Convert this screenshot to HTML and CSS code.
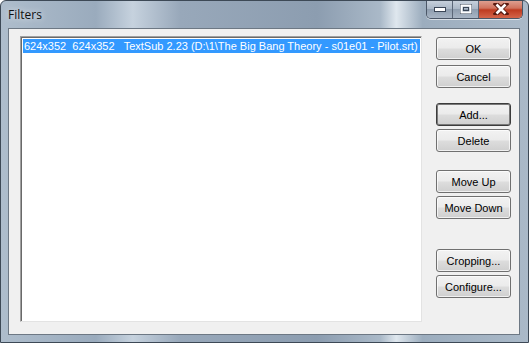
FILE: index.html
```html
<!DOCTYPE html>
<html lang="en">
<head>
    <meta charset="UTF-8">
    <title>Filters</title>
    <link rel="stylesheet" href="styles.css">
</head>
<body>
    <div class="window">
        <div class="titlebar">
            <span class="title">Filters</span>
            <div class="caption-buttons">
                <div class="cap cap-min">
                    <svg width="16" height="8" viewBox="0 0 16 8"><rect x="2.5" y="2.5" width="11" height="4" fill="#fff" stroke="#3a4656" stroke-width="1"/></svg>
                </div>
                <div class="cap cap-max">
                    <svg width="14" height="12" viewBox="0 0 14 12"><rect x="1.5" y="1.5" width="11" height="9" fill="none" stroke="#3a4656" stroke-width="1"/><rect x="2.5" y="2.5" width="9" height="7" fill="none" stroke="#fff" stroke-width="2"/><rect x="4.5" y="4.5" width="5" height="3" fill="none" stroke="#3a4656" stroke-width="1"/></svg>
                </div>
                <div class="cap cap-close">
                    <svg width="16" height="12" viewBox="0 0 16 12"><path d="M3 1 L8 5 L13 1 M3 11 L8 7 L13 11 M3 1 L13 11 M13 1 L3 11" stroke="#5a1a10" stroke-width="4.5" fill="none" stroke-linecap="square"/><path d="M3.5 1.5 L12.5 10.5 M12.5 1.5 L3.5 10.5" stroke="#fff" stroke-width="2.6" fill="none"/></svg>
                </div>
            </div>
        </div>
        <div class="client">
            <div class="listbox">
                <div class="item selected">624x352&nbsp;&nbsp;624x352&nbsp;&nbsp;&nbsp;TextSub 2.23 (D:\1\The Big Bang Theory - s01e01 - Pilot.srt)</div>
            </div>
            <div class="buttons">
                <button class="btn">OK</button>
                <button class="btn gap-sm">Cancel</button>
                <button class="btn btn-default gap-lg">Add...</button>
                <button class="btn gap-xs">Delete</button>
                <button class="btn gap-md">Move Up</button>
                <button class="btn gap-xs">Move Down</button>
                <button class="btn gap-xl">Cropping...</button>
                <button class="btn gap-xs">Configure...</button>
            </div>
        </div>
    </div>
</body>
</html>
```
FILE: styles.css
```css
body {
    margin: 0;
    padding: 0;
    background-color: #ffffff;
    font-family: 'Liberation Sans', Arial, sans-serif;
}

.window {
    width: 529px;
    height: 343px;
    box-sizing: border-box;
    display: flex;
    flex-direction: column;
    border: 1px solid #3d4956;
    border-radius: 6px 6px 0 0;
    background: linear-gradient(90deg, #aebdcc 0%, #9aabbd 18%, #c6d2de 25%, #98a8ba 34%, #8c9db0 60%, #aab9c8 72%, #dfe7ee 75%, #9cadbe 80%, #aab9c8 100%);
    overflow: hidden;
}

.titlebar {
    height: 27px;
    display: flex;
    justify-content: space-between;
    align-items: flex-start;
    padding-left: 7px;
    padding-right: 5px;
}

.title {
    font-family: 'Open Sans', 'Noto Sans', sans-serif;
    font-size: 12px;
    color: #111;
    margin-top: 5px;
    text-shadow: 0 0 6px rgba(255, 255, 255, 0.9);
}

.caption-buttons {
    display: flex;
    height: 18px;
    margin-top: -1px;
    border: 1px solid #4b5767;
    border-top: none;
    border-radius: 0 0 5px 5px;
    overflow: hidden;
    box-shadow: 0 1px 0 rgba(255, 255, 255, 0.6);
}

.cap {
    display: flex;
    align-items: center;
    justify-content: center;
}

.cap-min, .cap-max {
    width: 25px;
    background: linear-gradient(180deg, #c9d3de 0%, #aab7c6 50%, #8e9dae 51%, #a8b5c4 100%);
    border-right: 1px solid #5b6778;
}

.cap-close {
    width: 43px;
    background: linear-gradient(180deg, #e0a597 0%, #d0735e 45%, #be3b20 55%, #d4654a 100%);
}

.client {
    flex: 1;
    margin: 0 8px 7px 7px;
    background-color: #f0f0f0;
    border: 1px solid #6d7884;
    display: flex;
    gap: 14px;
    padding: 7px 8px 12px 11px;
}

.listbox {
    flex: 1;
    background-color: #ffffff;
    border-top: 1px solid #a0a0a0;
    border-left: 1px solid #a0a0a0;
    border-right: 1px solid #e3e3e3;
    border-bottom: 1px solid #e3e3e3;
    box-shadow: inset 1px 1px 0 #696969;
    padding: 2px 1px 1px 2px;
}

.item {
    font-size: 11px;
    line-height: 14px;
    padding-left: 1px;
    white-space: nowrap;
    overflow: hidden;
    color: #000;
}

.item.selected {
    background-color: #3399ff;
    color: #ffffff;
}

.buttons {
    width: 75px;
    display: flex;
    flex-direction: column;
    padding-top: 1px;
}

.btn {
    height: 23px;
    margin: 0;
    padding: 0;
    font-family: 'Liberation Sans', Arial, sans-serif;
    font-size: 11px;
    color: #000;
    border: 1px solid #707070;
    border-radius: 3px;
    background: linear-gradient(180deg, #f2f2f2 0%, #ebebeb 48%, #dddddd 52%, #cfcfcf 100%);
    box-shadow: inset 0 0 0 1px rgba(255, 255, 255, 0.7);
}

.btn-default {
    border-color: #3c3c3c;
    box-shadow: inset 0 0 0 1px #7a7a7a;
}

.gap-xs {
    margin-top: 3px;
}

.gap-sm {
    margin-top: 5px;
}

.gap-md {
    margin-top: 18px;
}

.gap-lg {
    margin-top: 15px;
}

.gap-xl {
    margin-top: 30px;
}
```
